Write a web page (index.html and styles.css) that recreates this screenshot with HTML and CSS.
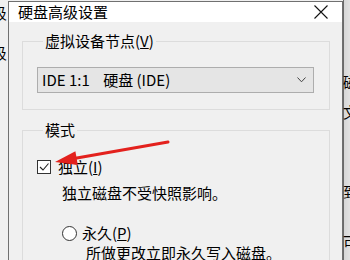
FILE: index.html
```html
<!DOCTYPE html>
<html lang="zh-CN">
<head>
<meta charset="utf-8">
<title>硬盘高级设置</title>
<link rel="stylesheet" href="styles.css">
</head>
<body>
<div class="screen">
  <div class="bg-left"><div class="frag-col"><div>汲</div><div>汲</div></div></div>
  <div class="dialog">
    <div class="titlebar">
      <span class="title">硬盘高级设置</span>
      <svg class="close" width="14" height="14" viewBox="0 0 14 14"><path d="M0.5 0.5 L13.5 13.5 M13.5 0.5 L0.5 13.5" stroke="#111" stroke-width="1.1" fill="none"/></svg>
    </div>
    <div class="body">
      <fieldset class="group g1">
        <legend>虚拟设备节点(<u>V</u>)</legend>
        <div class="select">
          <span>IDE 1:1&nbsp;&nbsp;&nbsp;&nbsp;硬盘 (IDE)</span>
          <svg class="chev" width="9" height="6" viewBox="0 0 9 6"><path d="M0.5 0.5 L4.5 4.8 L8.5 0.5" stroke="#444" stroke-width="1" fill="none"/></svg>
        </div>
      </fieldset>
      <fieldset class="group g2">
        <legend>模式</legend>
        <div class="row check-row">
          <span class="checkbox"><svg width="12" height="12" viewBox="0 0 12 12"><path d="M2 6 L5 9 L10.5 2.5" stroke="#222" stroke-width="1.1" fill="none"/></svg></span>
          <span>独立(<u>I</u>)</span>
        </div>
        <div class="desc d1">独立磁盘不受快照影响。</div>
        <div class="row radio-row">
          <span class="radio"></span>
          <span>永久(<u>P</u>)</span>
        </div>
        <div class="desc d2">所做更改立即永久写入磁盘。</div>
      </fieldset>
    </div>
  </div>
  <div class="bg-right">
    <div class="frag f1">磁</div>
    <div class="frag f2">文</div>
    <div class="frag f3">到</div>
    <div class="frag f4">可</div>
  </div>
  <svg class="arrow" width="350" height="260" viewBox="0 0 350 260">
    <line x1="168" y1="142" x2="74" y2="158.5" stroke="#e3211d" stroke-width="3" stroke-linecap="round"/>
    <polygon points="55,162 75.4,151.3 77.8,165.1" fill="#e3211d"/>
  </svg>
</div>
</body>
</html>
```

FILE: styles.css
```css
* { box-sizing: border-box; }
html, body { margin: 0; padding: 0; }
body {
  font-family: "Noto Sans CJK SC", "Noto Sans", sans-serif;
  font-size: 15px;
  color: #000;
  background: #f0f0f0;
}
.screen {
  position: relative;
  display: flex;
  width: 350px;
  height: 260px;
  overflow: hidden;
}
.bg-left {
  flex: none;
  width: 8px;
  overflow: hidden;
  background: #f0f0f0;
}
.frag-col {
  margin-left: -8px;
  padding-top: 3px;
  line-height: 40px;
  font-size: 15px;
}
.frag-col div { height: 40px; line-height: 20px; }
.dialog {
  flex: none;
  width: 335px;
  margin-top: 1px;
  border: 1px solid #707070;
  border-bottom: none;
  background: #f0f0f0;
  display: flex;
  flex-direction: column;
}
.titlebar {
  height: 36px;
  background: #fff;
  display: flex;
  align-items: center;
  justify-content: space-between;
  padding-left: 9px;
  padding-right: 14px;
}
.title { line-height: 20px; }
.body {
  padding: 9px 12px 0 13px;
}
.group {
  margin: 0;
  border: 1px solid #dcdcdc;
  padding: 0;
  min-width: 0;
}
.group legend {
  margin-left: 6px;
  padding: 0 2px;
  line-height: 20px;
  height: 20px;
}
.g1 { padding: 16px 15px 16px 14px; }
.select {
  height: 26px;
  background: #e5e5e5;
  border: 1px solid #adadad;
  display: flex;
  align-items: center;
  justify-content: space-between;
  padding-left: 4px;
  padding-right: 7px;
  line-height: 20px;
}
.g2 {
  margin-top: 10px;
  padding: 17px 14px 20px 14px;
}
.row {
  display: flex;
  align-items: center;
  height: 20px;
  line-height: 20px;
}
.checkbox {
  width: 14px;
  height: 14px;
  border: 1px solid #333;
  background: #fff;
  display: flex;
  align-items: center;
  justify-content: center;
  margin-right: 7px;
}
.checkbox svg { display: block; }
.desc { line-height: 20px; height: 20px; }
.d1 { margin-top: 6px; margin-left: 25px; }
.radio-row { margin-top: 20px; margin-left: 25px; }
.radio {
  width: 15px;
  height: 15px;
  border: 1px solid #333;
  border-radius: 50%;
  background: #fff;
  margin-right: 5px;
}
.d2 { margin-left: 49px; }
.bg-right {
  flex: none;
  width: 7px;
  overflow: hidden;
  background: linear-gradient(to right, #6a6a6a 0, #6a6a6a 1px, #d6d6d6 1px, #e2e2e2 100%);
  position: relative;
}
.frag {
  position: absolute;
  left: 0;
  line-height: 18px;
  width: 20px;
}
.f1 { top: 73px; }
.f2 { top: 103px; }
.f3 { top: 183px; }
.f4 { top: 233px; }
.arrow {
  position: absolute;
  left: 0;
  top: 0;
  pointer-events: none;
}
```
